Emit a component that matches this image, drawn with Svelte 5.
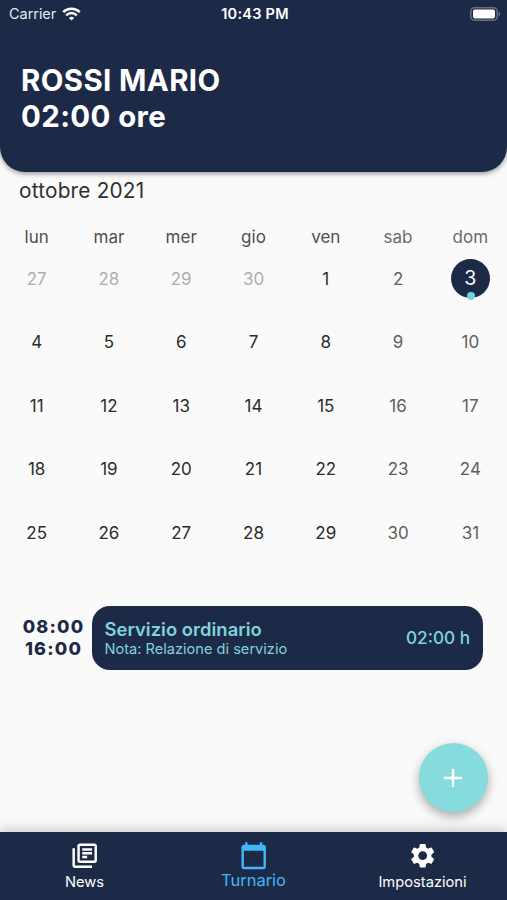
<script>
	const weekdays = ['lun', 'mar', 'mer', 'gio', 'ven', 'sab', 'dom'];

	// the first row starts with the last days of September
	const days = [27, 28, 29, 30, ...Array.from({ length: 31 }, (_, i) => i + 1)].map((n, i) => ({
		n,
		outside: i < 4,
		weekend: i % 7 > 4,
	}));

	let selected = 6;

	const tabs = [
		{
			label: 'News',
			icon: 'M20 2H8c-1.1 0-2 .9-2 2v12c0 1.1.9 2 2 2h12c1.1 0 2-.9 2-2V4c0-1.1-.9-2-2-2zm0 14H8V4h12v12zM4 6H2v14c0 1.1.9 2 2 2h14v-2H4V6zm6 3h8v2h-8V9zm0 3h4v2h-4v-2zm0-6h8v2h-8V6z'
		},
		{
			label: 'Turnario',
			icon: 'M20 3h-1V1h-2v2H7V1H5v2H4c-1.1 0-2 .9-2 2v16c0 1.1.9 2 2 2h16c1.1 0 2-.9 2-2V5c0-1.1-.9-2-2-2zm0 18H4V8h16v13z',
			active: true
		},
		{
			label: 'Impostazioni',
			icon: 'M19.14 12.94c.04-.3.06-.61.06-.94 0-.32-.02-.64-.07-.94l2.03-1.58c.18-.14.23-.41.12-.61l-1.92-3.32c-.12-.22-.37-.29-.59-.22l-2.39.96c-.5-.38-1.03-.7-1.62-.94l-.36-2.54c-.04-.24-.24-.41-.48-.41h-3.84c-.24 0-.43.17-.47.41l-.36 2.54c-.59.24-1.13.57-1.62.94l-2.39-.96c-.22-.08-.47 0-.59.22L2.74 8.87c-.12.21-.08.47.12.61l2.03 1.58c-.05.3-.09.63-.09.94s.02.64.07.94l-2.03 1.58c-.18.14-.23.41-.12.61l1.92 3.32c.12.22.37.29.59.22l2.39-.96c.5.38 1.03.7 1.62.94l.36 2.54c.05.24.24.41.48.41h3.84c.24 0 .44-.17.47-.41l.36-2.54c.59-.24 1.13-.56 1.62-.94l2.39.96c.22.08.47 0 .59-.22l1.92-3.32c.12-.22.07-.47-.12-.61l-2.01-1.58zM12 15.6c-1.98 0-3.6-1.62-3.6-3.6s1.62-3.6 3.6-3.6 3.6 1.62 3.6 3.6-1.62 3.6-3.6 3.6z'
		},
	];
</script>

<div class="app">
	<header>
		<div class="status">
			<div class="carrier">
				<span>Carrier</span>
				<svg width="19" height="14" viewBox="0 0 19 14" fill="none" stroke="#fff" stroke-width="2.5">
					<path d="M1.2 5.2a11.8 11.8 0 0 1 16.6 0" />
					<path d="M4.2 8.3a7.5 7.5 0 0 1 10.6 0" />
					<path d="M9.5 13.6 6.9 11a3.7 3.7 0 0 1 5.2 0z" fill="#fff" stroke="none" />
				</svg>
			</div>
			<span class="clock">10:43 PM</span>
			<div class="power">
				<svg width="31" height="14" viewBox="0 0 31 14">
					<rect x=".75" y=".75" width="26.5" height="12.5" rx="3.8" fill="none" stroke="#fff" stroke-opacity=".32" stroke-width="1.5" />
					<rect x="3" y="2.6" width="22" height="8.8" rx="1.8" fill="#fff" />
					<path d="M28.7 4.8c2 .8 2 3.6 0 4.4z" fill="#fff" fill-opacity=".4" />
				</svg>
			</div>
		</div>
		<h1>ROSSI MARIO<br />02:00 ore</h1>
	</header>

	<main>
		<h2>ottobre 2021</h2>

		<div class="weekdays">
			{#each weekdays as day, i}
				<span class:weekend={i > 4}>{day}</span>
			{/each}
		</div>

		<div class="days">
			{#each days as day, i}
				<button
					class="day"
					class:outside={day.outside}
					class:weekend={day.weekend}
					class:selected={selected === i}
					on:click={() => (selected = i)}
				>
					<span class="num">{day.n}</span>
					{#if i === 6}<span class="dot"></span>{/if}
				</button>
			{/each}
		</div>

		<div class="shift">
			<div class="hours">
				<span>08:00</span>
				<span>16:00</span>
			</div>
			<div class="card">
				<div class="info">
					<span class="title">Servizio ordinario</span>
					<span class="note">Nota: Relazione di servizio</span>
				</div>
				<span class="total">02:00 h</span>
			</div>
		</div>
	</main>

	<button class="fab" aria-label="Aggiungi">
		<svg width="18" height="18" viewBox="0 0 18 18" stroke="#fff" stroke-width="2.4">
			<path d="M9 0v18M0 9h18" />
		</svg>
	</button>

	<nav>
		{#each tabs as tab}
			<button class="tab" class:active={tab.active}>
				<svg width="29.4" height="29.4" viewBox="0 0 24 24" fill="currentColor">
					<path d={tab.icon} />
				</svg>
				<span>{tab.label}</span>
			</button>
		{/each}
	</nav>
</div>

<style>
	:global(body) {
		margin: 0;
		background: #fafafa;
	}

	.app {
		--navy: #1d2a47;
		--teal: #86dcdd;
		position: relative;
		display: flex;
		flex-direction: column;
		width: 507px;
		height: 900px;
		overflow: hidden;
		background: #fafafa;
		font-family: Inter, Roboto, sans-serif;
	}

	button {
		padding: 0;
		border: 0;
		background: none;
		font: inherit;
		color: inherit;
	}

	header {
		box-sizing: border-box;
		height: 171.5px;
		flex: none;
		border-radius: 0 0 25px 25px;
		background: var(--navy);
		box-shadow: 0 2px 5px rgba(0, 0, 0, 0.38);
		color: #fff;
	}

	.status {
		display: grid;
		grid-template-columns: 1fr auto 1fr;
		align-items: center;
		height: 27px;
		padding: 0 6px 0 9px;
		font-size: 14.5px;
	}

	.carrier {
		display: flex;
		align-items: center;
		gap: 6px;
		color: #e4e7ee;
		letter-spacing: -0.05px;
	}

	.clock {
		font-weight: 600;
		font-size: 14.5px;
		letter-spacing: 0.25px;
	}

	.power {
		display: flex;
		justify-content: flex-end;
	}

	h1 {
		margin: 36px 0 0 21px;
		font-size: 29.4px;
		line-height: 35.5px;
		font-weight: 700;
		letter-spacing: 0.4px;
	}

	main {
		flex: 1;
	}

	h2 {
		margin: 6px 0 0 19px;
		font-size: 20.8px;
		line-height: 25px;
		font-weight: 400;
		letter-spacing: 0.2px;
		color: #303030;
	}

	.weekdays,
	.days {
		display: grid;
		grid-template-columns: repeat(7, 1fr);
		padding: 0 0.5px;
		text-align: center;
	}

	.weekdays {
		margin-top: 24.5px;
		font-size: 17px;
		line-height: 20px;
		color: #4f4f4f;
	}

	.weekdays .weekend {
		color: #6a6a6a;
	}

	.days {
		grid-auto-rows: 63.5px;
		margin-top: -0.2px;
	}

	.day {
		position: relative;
		display: flex;
		align-items: center;
		justify-content: center;
		font-size: 17px;
		color: #2b2b2b;
	}

	.day.weekend {
		color: #5f5f5f;
	}

	.day.outside {
		color: #aeaeae;
	}

	.day.selected .num {
		width: 39px;
		height: 39px;
		border-radius: 50%;
		background: var(--navy);
		color: #fafafa;
		font-size: 19.6px;
		line-height: 39px;
	}

	.dot {
		position: absolute;
		left: 50%;
		bottom: 10.5px;
		width: 8px;
		height: 8px;
		margin-left: -3.5px;
		border-radius: 50%;
		background: #6fd3d8;
	}

	.shift {
		display: flex;
		align-items: center;
		margin: 41.4px 24.5px 0 23px;
	}

	.hours {
		display: flex;
		flex-direction: column;
		align-items: center;
		width: 61px;
		margin-right: 8px;
		font-size: 18px;
		line-height: 22px;
		font-weight: 800;
		letter-spacing: 1.2px;
		color: var(--navy);
	}

	.card {
		box-sizing: border-box;
		flex: 1;
		display: flex;
		align-items: center;
		justify-content: space-between;
		height: 64px;
		padding: 0 12.5px;
		border-radius: 18px;
		background: var(--navy);
		color: #7fd3dc;
	}

	.info {
		display: flex;
		flex-direction: column;
		padding-top: 2px;
	}

	.title {
		font-size: 18.4px;
		line-height: 21px;
		font-weight: 600;
		letter-spacing: 0.03px;
	}

	.note {
		font-size: 14.6px;
		line-height: 18px;
	}

	.total {
		font-size: 17.2px;
		font-weight: 500;
	}

	.fab {
		position: absolute;
		right: 19.5px;
		bottom: 88px;
		display: flex;
		align-items: center;
		justify-content: center;
		width: 69px;
		height: 69px;
		border-radius: 50%;
		background: var(--teal);
		box-shadow: 0 5px 8px rgba(0, 0, 0, 0.2), 0 3px 14px rgba(0, 0, 0, 0.14);
	}

	nav {
		display: grid;
		grid-template-columns: repeat(3, 1fr);
		flex: none;
		height: 68.5px;
		background: var(--navy);
		box-shadow: 0 -2px 12px rgba(30, 42, 71, 0.25);
	}

	.tab {
		display: flex;
		flex-direction: column;
		align-items: center;
		padding-top: 9px;
		color: #fff;
		font-size: 14.7px;
		line-height: 18px;
	}

	.tab span {
		margin-top: 3px;
	}

	.tab.active {
		color: #40b8f5;
		font-size: 16.5px;
	}

	.tab.active span {
		margin-top: 1.5px;
	}
</style>
